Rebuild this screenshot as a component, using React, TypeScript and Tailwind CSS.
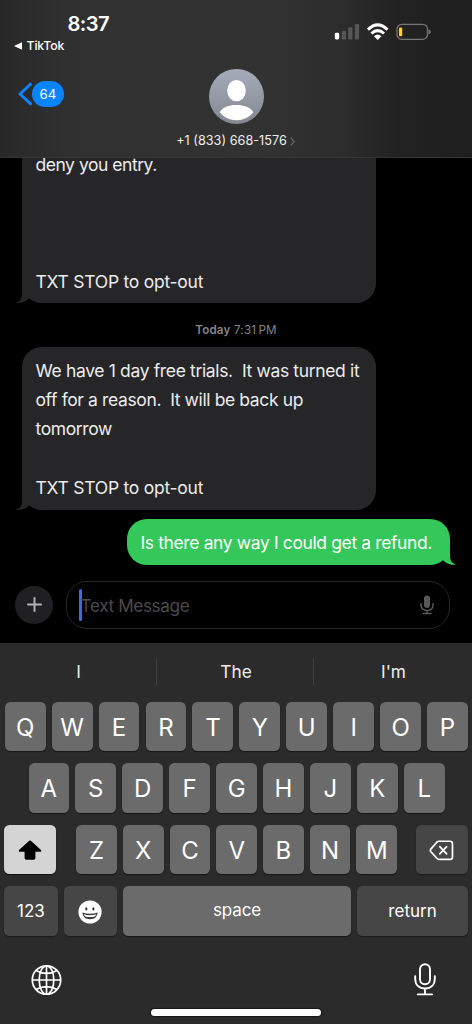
import React from "react";

function Key({ label }: { label: string }) {
  return (
    <div className="flex h-[49.6px] w-[40.8px] shrink-0 items-center justify-center rounded-[5.5px] bg-[#6b6b6b] pt-[2px] text-[24px] leading-none text-white shadow-[0_1px_1px_#161616]">
      {label}
    </div>
  );
}

function Tail({ className }: { className: string }) {
  return (
    <svg className={`absolute bottom-0 h-[20px] w-[14px] ${className}`} viewBox="0 0 14 20" aria-hidden="true">
      <path d="M0 0H8V11C8 15.5 10 18.3 14 19.5C8.5 20.5 4.5 18.6 1 15.2L0 10Z" fill="currentColor" />
    </svg>
  );
}

function Incoming({ children, className }: { children: React.ReactNode; className: string }) {
  return (
    <div
      className={`relative ml-[22px] w-[353.5px] shrink-0 bg-[#262628] pl-[13.5px] text-[17.5px] leading-[29.25px] whitespace-pre text-[#ececee] ${className}`}
    >
      {children}
      <Tail className="-left-[6px] -scale-x-100 text-[#262628]" />
    </div>
  );
}

function Header() {
  return (
    <header className="flex h-[158px] shrink-0 flex-col border-b border-[#353536] bg-[linear-gradient(90deg,#282828_0%,#303030_14%,#323232_55%,#2d2d2d_72%,#222222_84%,#1e1e1e_100%)]">
      <div className="flex h-[64px] justify-between">
        <div className="pt-[12px] pl-[14px]">
          <div className="pl-[53.5px] text-[20.2px] leading-[24px] font-semibold tracking-[-0.55px] text-white">8:37</div>
          <div className="flex items-center gap-[4.5px] pt-px text-[12.3px] leading-[18px] font-medium tracking-[-0.15px] text-white">
            <svg className="h-[8px] w-[8px]" viewBox="0 0 8 8" aria-hidden="true">
              <path d="M0 4L8 .2V7.8Z" fill="white" />
            </svg>
            TikTok
          </div>
        </div>
        <div className="flex items-start pt-[22px] pr-[40px]">
          <svg className="h-[19px] w-[98px]" viewBox="334 22 98 19" aria-hidden="true">
            <rect x="334.8" y="32.8" width="4.4" height="6.6" rx="1.4" fill="white" />
            <rect x="341.8" y="30.7" width="4.2" height="8.7" rx="1.2" fill="#555" />
            <rect x="348.2" y="27.3" width="4.2" height="12.1" rx="1.2" fill="#555" />
            <rect x="354.8" y="24" width="4.3" height="15.4" rx="1.2" fill="#555" />
            <g fill="none" stroke="white" strokeWidth="3">
              <path d="M367.9 29.7Q377.7 20.2 387.5 29.7" />
              <path d="M371.4 33.5Q377.7 27.7 384 33.5" />
            </g>
            <path d="M374 36.3Q377.7 32.8 381.4 36.3L378.3 39.4Q377.7 40 377.1 39.4Z" fill="white" />
            <rect x="397" y="24.3" width="30.5" height="15" rx="4.8" fill="none" stroke="#777" strokeWidth="1.3" />
            <path d="M428.6 29.2C431.4 29.9 431.4 33.7 428.6 34.4Z" fill="#777" />
            <rect x="399" y="27.4" width="3.2" height="8.8" rx="1" fill="#ffd60a" />
          </svg>
        </div>
      </div>
      <div className="grid grid-cols-[1fr_119px_1fr] pt-[4.5px]">
        <div className="mt-[12.5px] flex h-[26px] items-center pl-[18px]">
          <svg className="h-[24px] w-[14px]" viewBox="0 0 14 24" aria-hidden="true">
            <path d="M12.6 2.2L2 12L12.6 21.8" fill="none" stroke="#0a84ff" strokeWidth="3" strokeLinecap="round" strokeLinejoin="round" />
          </svg>
          <div className="flex h-[26px] w-[32px] items-center justify-center rounded-full bg-[#0a84ff] pt-px text-[13.2px] tracking-[0.1px] text-white">
            64
          </div>
        </div>
        <div className="flex flex-col items-center">
          <svg className="h-[55px] w-[55px]" viewBox="0 0 55 55" aria-hidden="true">
            <defs>
              <linearGradient id="avatar" x1="0" y1="0" x2="0" y2="1">
                <stop offset="0" stopColor="#a5abb9" />
                <stop offset="1" stopColor="#858892" />
              </linearGradient>
            </defs>
            <circle cx="27.5" cy="27.5" r="27.5" fill="url(#avatar)" />
            <ellipse cx="27.5" cy="21.6" rx="9.3" ry="10.7" fill="white" />
            <path d="M10.7 43.2C13.5 38 19.7 35.9 27.5 35.9S41.5 38 44.3 43.2C40 48.5 34.3 51.2 27.5 51.2S15 48.5 10.7 43.2Z" fill="white" />
          </svg>
          <div className="mt-[8.5px] flex items-center gap-[3px] pr-px text-[12.7px] leading-[18px] whitespace-nowrap text-[#ededed]">
            +1 (833) 668-1576
            <svg className="h-[9px] w-[5px]" viewBox="0 0 5 9" aria-hidden="true">
              <path d="M.7.7L4.3 4.5L.7 8.3" fill="none" stroke="#6c6c6f" strokeWidth="1.1" />
            </svg>
          </div>
        </div>
      </div>
    </header>
  );
}

function Conversation() {
  return (
    <main className="flex h-[485px] shrink-0 flex-col bg-black">
      <div className="flex h-[145px] shrink-0 flex-col justify-end overflow-hidden">
        <Incoming className="h-[153.5px] rounded-b-[20px]">
          <span className="tracking-[-0.47px]">deny you entry.</span>
          {"\n\n\n\n"}
          <span className="tracking-[-0.25px]">TXT STOP to opt-out</span>
        </Incoming>
      </div>
      <div className="mt-[17.5px] text-center text-[11.6px] leading-[18px] tracking-[0.2px] text-[#85858a]">
        <span className="font-semibold">Today</span> 7:31{"\u2009"}PM
      </div>
      <Incoming className="mt-[8.5px] h-[163px] rounded-[20px] pt-[8.5px]">
        <span className="tracking-[-0.35px]">{"We have 1 day free trials.  It was turned it\n"}</span>
        <span className="tracking-[-0.38px]">{"off for a reason.  It will be back up\ntomorrow\n\n"}</span>
        <span className="tracking-[-0.25px]">TXT STOP to opt-out</span>
      </Incoming>
      <div className="relative mt-[9px] mr-[22px] flex h-[46px] w-[323px] shrink-0 items-center self-end rounded-[20px] bg-[#34c759] pt-[2px] pl-[13.5px] text-[17.5px] tracking-[-0.38px] whitespace-nowrap text-white">
        Is there any way I could get a refund.
        <Tail className="-right-[6px] text-[#34c759]" />
      </div>
      <div className="mt-[16px] flex shrink-0 items-center pl-[15px]">
        <div className="flex h-[38px] w-[38px] items-center justify-center rounded-full bg-[#202022]">
          <svg className="h-[15px] w-[15px]" viewBox="0 0 15 15" aria-hidden="true">
            <path d="M7.5 1V14M1 7.5H14" stroke="#b2b2b4" strokeWidth="2" strokeLinecap="round" />
          </svg>
        </div>
        <div className="ml-[13px] flex h-[47.5px] w-[384px] items-center rounded-[21px] border border-[#262628] pr-[15.5px] pl-[12px]">
          <div className="h-[32.5px] w-[2.6px] rounded-full bg-[#3f69ed]" />
          <div className="-ml-px grow pt-[2px] text-[17.2px] tracking-[-0.4px] text-[#4a4a4c]">Text Message</div>
          <svg className="h-[20px] w-[14px]" viewBox="0 0 14 20" aria-hidden="true">
            <rect x="4" y="0.5" width="6" height="12.4" rx="3" fill="#58585a" />
            <path d="M1 8.8V10C1 13.3 3.5 15.4 7 15.4S13 13.3 13 10V8.8M7 15.4V18.2M2.9 18.4H11.1" fill="none" stroke="#58585a" strokeWidth="1.5" strokeLinecap="round" />
          </svg>
        </div>
      </div>
    </main>
  );
}

function Keyboard() {
  return (
    <section className="flex h-[381px] shrink-0 flex-col bg-[#2b2b2b]">
      <div className="flex h-[58.9px] shrink-0 text-[17.3px] text-[#ededed]">
        <div className="flex w-[156px] items-center justify-center pl-px">I</div>
        <div className="mt-[15px] h-[27px] w-px bg-[#434343]" />
        <div className="flex w-[156px] items-center justify-center pl-[2px]">The</div>
        <div className="mt-[15px] h-[27px] w-px bg-[#434343]" />
        <div className="flex grow items-center justify-center pl-px">I'm</div>
      </div>
      <div className="flex flex-col gap-[11.9px]">
        <div className="flex justify-between pr-[4px] pl-[4.8px]">
          {"QWERTYUIOP".split("").map((k) => <Key key={k} label={k} />)}
        </div>
        <div className="flex justify-between pr-[27.3px] pl-[28.5px]">
          {"ASDFGHJKL".split("").map((k) => <Key key={k} label={k} />)}
        </div>
        <div className="flex px-[4.2px]">
          <div className="flex h-[49.6px] w-[52.3px] items-center justify-center rounded-[5.5px] bg-[#d4d4d4] pt-px shadow-[0_1px_1px_#111]">
            <svg className="h-[20px] w-[24px]" viewBox="0 0 24 20" aria-hidden="true">
              <path d="M11.2.8Q12 .1 12.8.8L23 10Q24 11.5 22.5 11.7H17.4V18Q17.4 19.8 15.6 19.8H8.4Q6.6 19.8 6.6 18V11.7H1.5Q0 11.5 1 10Z" fill="black" />
            </svg>
          </div>
          <div className="ml-[19.7px] flex w-[321.1px] justify-between">
            {"ZXCVBNM".split("").map((k) => <Key key={k} label={k} />)}
          </div>
          <div className="ml-auto flex h-[49.6px] w-[52px] items-center justify-center rounded-[5.5px] bg-[#464646] pt-px shadow-[0_1px_1px_#1c1c1c]">
            <svg className="h-[21px] w-[25px]" viewBox="0 0 26 22" fill="none" stroke="white" strokeWidth="1.8" strokeLinecap="round" strokeLinejoin="round" aria-hidden="true">
              <path d="M8.6 1.8Q9.2 1.3 10 1.3H22Q24.5 1.3 24.5 3.8V17.7Q24.5 20.2 22 20.2H10Q9.2 20.2 8.6 19.6L1.8 12.1Q.8 10.9 1.8 9.6Z" />
              <path d="M11.2 7L18.4 14.6M18.4 7L11.2 14.6" />
            </svg>
          </div>
        </div>
        <div className="flex gap-[6px] px-[4.2px] text-[17px] text-white">
          <div className="flex h-[49.6px] w-[53.6px] items-center justify-center rounded-[5.5px] bg-[#464646] pt-[2px] shadow-[0_1px_1px_#1c1c1c]">123</div>
          <div className="flex h-[49.6px] w-[53px] items-center justify-center rounded-[5.5px] bg-[#464646] pt-px shadow-[0_1px_1px_#1c1c1c]">
            <svg className="h-[24px] w-[24px]" viewBox="0 0 24 24" aria-hidden="true">
              <circle cx="12" cy="12" r="11.6" fill="white" />
              <ellipse cx="8.3" cy="8.9" rx="1.1" ry="1.7" fill="#333" />
              <ellipse cx="15.4" cy="8.9" rx="1.1" ry="1.7" fill="#333" />
              <path d="M4.3 12.6Q12 15 19.7 12.6Q19 19.3 12 19.3T4.3 12.6Z" fill="#3b3b3b" />
              <path d="M5.8 14.2Q12 16.1 18.2 14.2Q17.8 15.7 16.8 16.4Q12 17.5 7.2 16.4Q6.2 15.7 5.8 14.2Z" fill="white" />
            </svg>
          </div>
          <div className="flex h-[49.6px] w-[228.5px] items-center justify-center rounded-[5.5px] bg-[#6b6b6b] tracking-[-0.1px] shadow-[0_1px_1px_#161616]">space</div>
          <div className="flex h-[49.6px] grow items-center justify-center rounded-[5.5px] bg-[#464646] pt-[2px] shadow-[0_1px_1px_#1c1c1c]">return</div>
        </div>
      </div>
      <div className="flex items-center justify-between pt-[27px] pr-[36px] pl-[31px]">
        <svg className="mt-px h-[32px] w-[31px]" viewBox="0 0 31 32" fill="none" stroke="white" strokeWidth="1.7" aria-hidden="true">
          <circle cx="15.5" cy="16" r="14.2" />
          <ellipse cx="15.5" cy="16" rx="7.3" ry="14.2" />
          <path d="M15.5 1.8V30.2M1.3 16H29.7M5 6.4Q15.5 12.4 26 6.4M5 25.6Q15.5 19.6 26 25.6" />
        </svg>
        <svg className="h-[33px] w-[22px]" viewBox="0 0 22 33" fill="none" stroke="white" strokeWidth="1.9" strokeLinecap="round" aria-hidden="true">
          <rect x="6" y="1.2" width="10" height="20" rx="5" />
          <path d="M1.2 13.3V15.8C1.2 21.7 5 25.5 11 25.5S20.8 21.7 20.8 15.8V13.3M11 25.5V31.4M3.8 31.4H18.2" />
        </svg>
      </div>
      <div className="mt-auto mb-[8px] ml-[151px] h-[7px] w-[170px] rounded-full bg-white shadow-[0_0_1px_1px_#151515]" />
    </section>
  );
}

export default function App() {
  return (
    <div className="flex h-[1024px] w-[472px] flex-col overflow-hidden bg-black font-['Inter',sans-serif]">
      <Header />
      <Conversation />
      <Keyboard />
    </div>
  );
}
